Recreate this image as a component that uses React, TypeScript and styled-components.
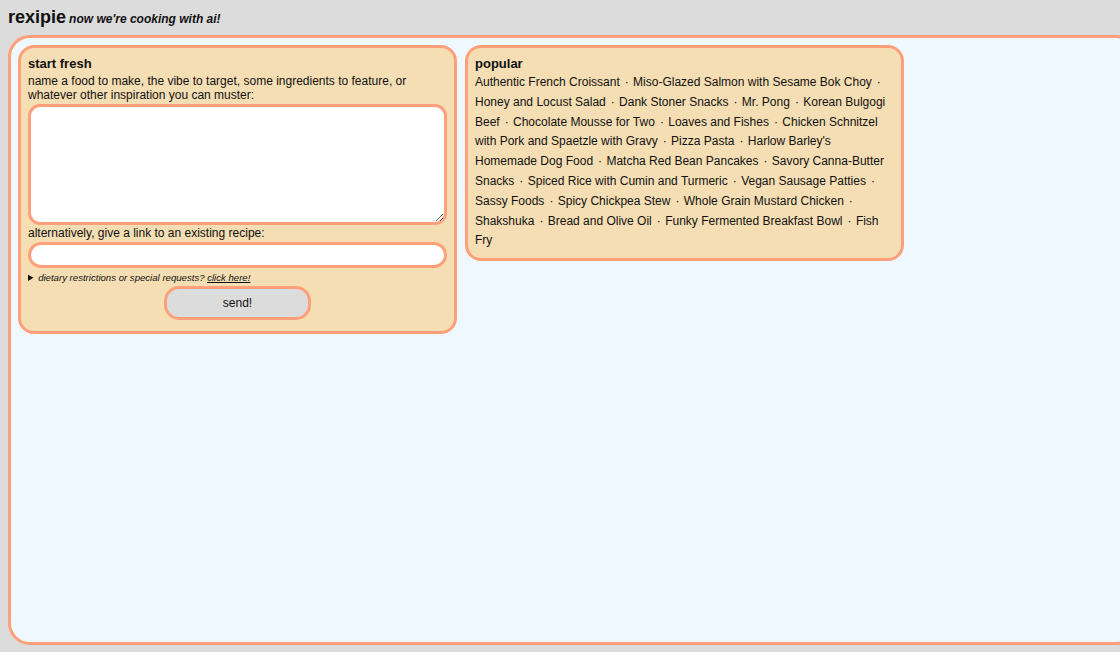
import React from "react";
import styled, { createGlobalStyle } from "styled-components";

const salmon = "#ffa07a";

const Global = createGlobalStyle`
  html, body { margin: 0; padding: 0; }
  body {
    background: #dcdcdc;
    font-family: "Liberation Sans", Arial, sans-serif;
    color: #111;
    overflow: hidden;
    width: 1120px;
    height: 652px;
  }
`;

const Page = styled.div`
  display: flex;
  flex-direction: column;
  padding: 6px 0 0 8px;
  height: 652px;
  box-sizing: border-box;
`;

const Header = styled.header`
  display: flex;
  align-items: baseline;
  gap: 3px;
  height: 29px;
`;

const Logo = styled.h1`
  margin: 0;
  font-size: 18px;
  font-weight: bold;
  line-height: 22px;
`;

const Tagline = styled.span`
  font-size: 12px;
  font-weight: bold;
  font-style: italic;
`;

const Main = styled.main`
  width: 1130px;
  height: 610px;
  box-sizing: border-box;
  background: #f0f8ff;
  border: 3px solid ${salmon};
  border-radius: 22px;
  padding: 7px;
  display: flex;
  align-items: flex-start;
  gap: 8px;
`;

const Card = styled.section`
  width: 439px;
  box-sizing: border-box;
  background: #f5deb3;
  border: 3px solid ${salmon};
  border-radius: 16px;
  padding: 8px 7px 7px 7px;
  display: flex;
  flex-direction: column;
`;

const Title = styled.h2<{ $gap: number }>`
  margin: 0 0 ${(p) => p.$gap}px;
  font-size: 13px;
  font-weight: bold;
  line-height: 16px;
`;

const Text = styled.p`
  margin: 0;
  font-size: 12px;
  line-height: 14px;
`;

const TextArea = styled.textarea`
  margin: 2px 0 1px;
  width: 100%;
  height: 121px;
  box-sizing: border-box;
  background: #fff;
  border: 3px solid ${salmon};
  border-radius: 12px;
  outline: none;
  font-family: inherit;
  font-size: 12px;
  padding: 6px;
`;

const LinkInput = styled.input`
  margin: 2px 0 0;
  width: 100%;
  height: 26px;
  box-sizing: border-box;
  background: #fff;
  border: 3px solid ${salmon};
  border-radius: 13px;
  outline: none;
  font-family: inherit;
  font-size: 12px;
  padding: 0 8px;
`;

const Details = styled.details`
  margin: 3px 0 0;
  font-size: 9.6px;
  font-style: italic;
  line-height: 14px;
  summary { cursor: pointer; }
  u { text-decoration: underline; }
`;

const ButtonRow = styled.div`
  display: flex;
  justify-content: center;
  margin: 1px 0 4px;
`;

const SendButton = styled.button`
  width: 147px;
  height: 34px;
  box-sizing: border-box;
  background: #dcdcdc;
  border: 3px solid ${salmon};
  border-radius: 15px;
  font-family: inherit;
  font-size: 12px;
  color: #111;
  cursor: pointer;
`;

const List = styled.div`
  font-size: 12px;
  line-height: 19.8px;
`;

const Item = styled.span``;

const Sep = styled.span`
  margin: 0 1px 0 5px;
`;

const popular = [
  "Authentic French Croissant",
  "Miso-Glazed Salmon with Sesame Bok Choy",
  "Honey and Locust Salad",
  "Dank Stoner Snacks",
  "Mr. Pong",
  "Korean Bulgogi Beef",
  "Chocolate Mousse for Two",
  "Loaves and Fishes",
  "Chicken Schnitzel with Pork and Spaetzle with Gravy",
  "Pizza Pasta",
  "Harlow Barley's Homemade Dog Food",
  "Matcha Red Bean Pancakes",
  "Savory Canna-Butter Snacks",
  "Spiced Rice with Cumin and Turmeric",
  "Vegan Sausage Patties",
  "Sassy Foods",
  "Spicy Chickpea Stew",
  "Whole Grain Mustard Chicken",
  "Shakshuka",
  "Bread and Olive Oil",
  "Funky Fermented Breakfast Bowl",
  "Fish Fry",
];

export default function App() {
  return (
    <>
      <Global />
      <Page>
        <Header>
          <Logo>rexipie</Logo>
          <Tagline>now we're cooking with ai!</Tagline>
        </Header>
        <Main>
          <Card>
            <Title $gap={2}>start fresh</Title>
            <Text>
              name a food to make, the vibe to target, some ingredients to feature, or
              whatever other inspiration you can muster:
            </Text>
            <TextArea />
            <Text>alternatively, give a link to an existing recipe:</Text>
            <LinkInput type="text" />
            <Details>
              <summary>
                dietary restrictions or special requests? <u>click here!</u>
              </summary>
            </Details>
            <ButtonRow>
              <SendButton>send!</SendButton>
            </ButtonRow>
          </Card>
          <Card>
            <Title $gap={1}>popular</Title>
            <List>
              {popular.map((p, i) => (
                <React.Fragment key={p}>
                  <Item>{p}</Item>
                  {i < popular.length - 1 && (
                    <>
                      <Sep>·</Sep>{" "}
                    </>
                  )}
                </React.Fragment>
              ))}
            </List>
          </Card>
        </Main>
      </Page>
    </>
  );
}
